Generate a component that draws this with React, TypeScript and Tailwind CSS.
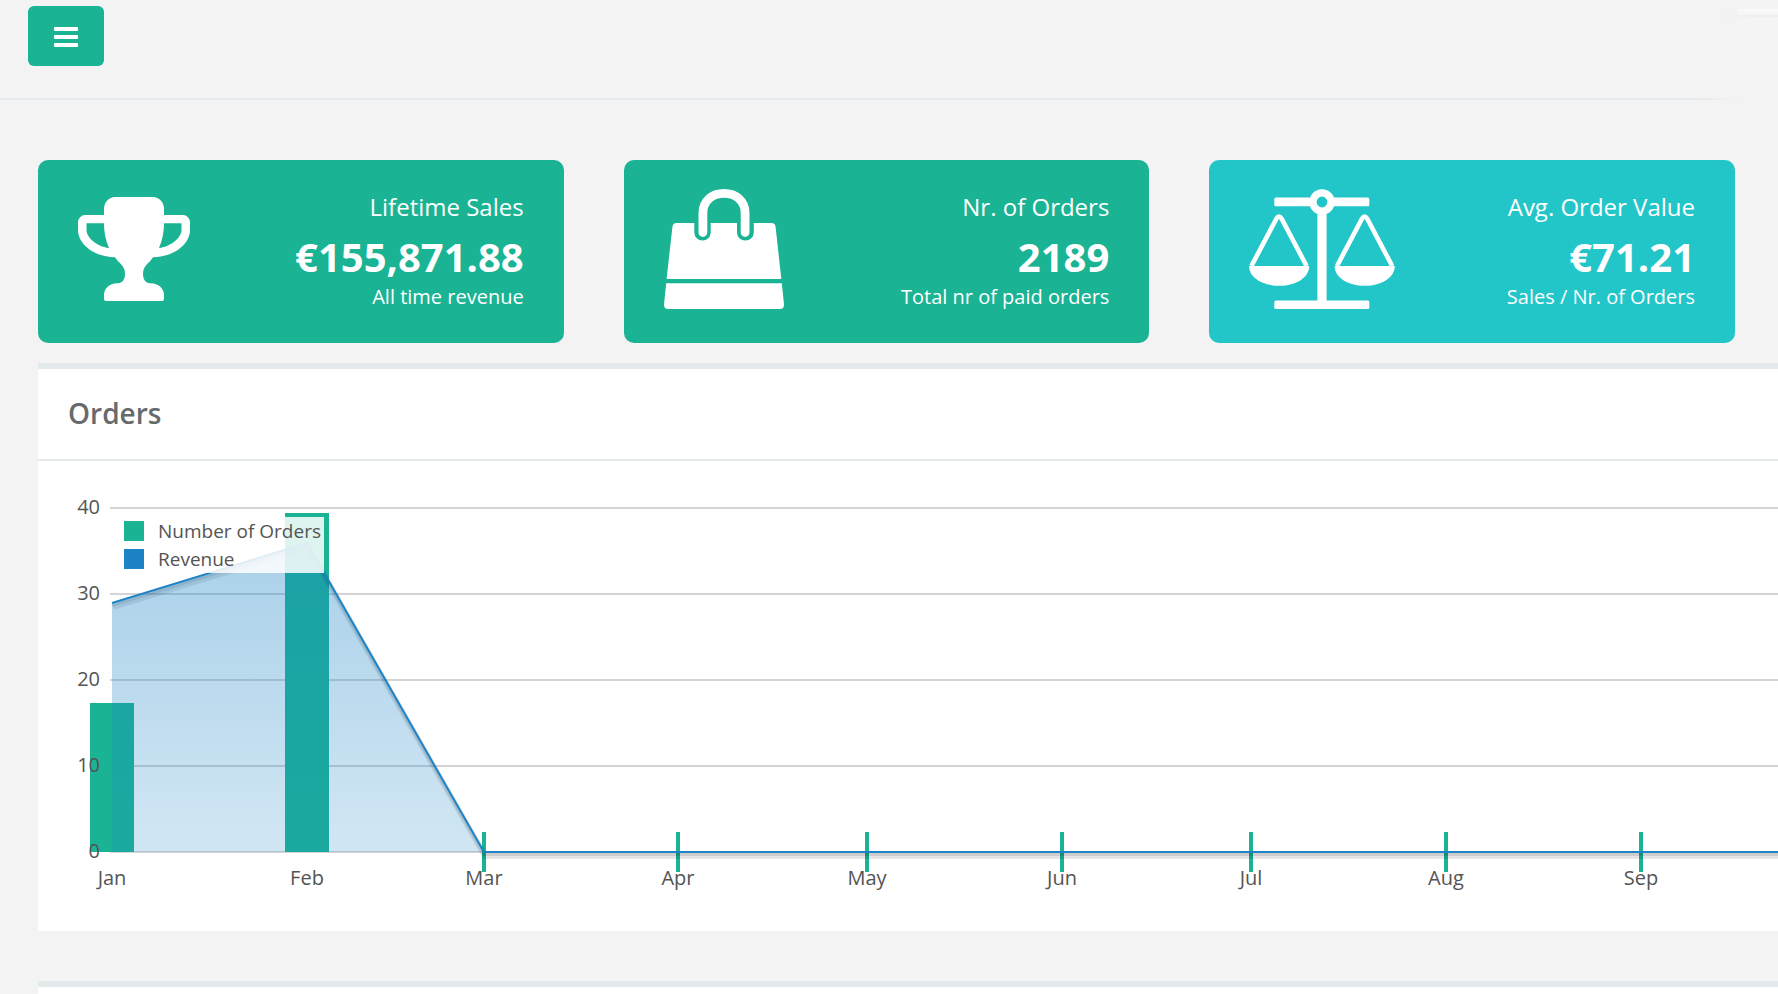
import type { ReactNode } from 'react';

const TrophyIcon = () => (
  <svg aria-hidden="true" width="112" height="120" viewBox="0 -8 112 120" fill="#fff">
    <path
      fillRule="evenodd"
      d="M26 18V12A11 12 0 0 1 37 0H75A11 12 0 0 1 86 12V18H105A7 7.500 0 0 1 112 25.500V33C112 47 96 60 75 60.300C71 67 65 68 65 77C65 83 68 86.300 73 86.300C80 86.500 86 91 86 98V102A2 2 0 0 1 84 104H28A2 2 0 0 1 26 102V98C26 91 32 86.500 39 86.300C44 86.300 47 83 47 77C47 68 41 67 37 60.300C16 60 0 47 0 33V25.500A7 7.500 0 0 1 7 18ZM26 26.300H8.500V33C8.500 40 18 49.500 31 51C27.500 43 26 35 26 26.300ZM86 26.300C86 35 84.500 43 81 51C94 49.500 103.500 40 103.500 33V26.300Z"
    />
  </svg>
);

const BagIcon = () => (
  <svg aria-hidden="true" width="120" height="120" viewBox="0 0 120 120" fill="#fff">
    <path d="M12.500 34H30.300V43.500A8.200 8 0 0 0 46.700 43.500V34H73V43.500A8.400 8 0 0 0 89.800 43.500V34H107.500Q111.300 34 111.600 38L117.300 90H2.600L8.400 38Q8.700 34 12.500 34Z" />
    <path d="M2.200 94.300H117.800L120 115.500Q120 120 116 120H4Q0 120 0 115.500Z" />
    <path
      d="M38.900 43.500V24C38.900 12 48 4.400 60 4.400S81.100 12 81.100 24V43.500"
      fill="none"
      stroke="#fff"
      strokeWidth="8.800"
      strokeLinecap="round"
    />
  </svg>
);

const Pan = ({ x }: { x: number }) => (
  <g transform={`translate(${x} 0)`}>
    <path d="M2.400 77L27.500 29.500Q30 25.800 32.500 29.500L57.600 77" fill="none" stroke="#fff" strokeWidth="4.600" />
    <path d="M0 77H60.200C60.200 88.500 47 96.800 30.100 96.800S0 88.500 0 77Z" />
  </g>
);

const ScaleIcon = () => (
  <svg aria-hidden="true" width="146" height="120" viewBox="0 0 146 120" fill="#fff">
    <rect x="25.300" y="8.600" width="36" height="8.600" rx="1.500" />
    <rect x="84" y="8.600" width="36.300" height="8.600" rx="1.500" />
    <circle cx="73" cy="13" r="9.100" fill="none" stroke="#fff" strokeWidth="7.400" />
    <rect x="68.400" y="24" width="9.200" height="90" />
    <rect x="25.300" y="111.400" width="95" height="8.600" rx="1.500" />
    <Pan x={0} />
    <Pan x={85.600} />
  </svg>
);

type StatProps = { icon: ReactNode; title: string; value: string; note: string; color: string };

const StatCard = ({ icon, title, value, note, color }: StatProps) => (
  <article className={`flex flex-1 items-start justify-between rounded-[10px] px-10 pt-[27px] pb-[34px] text-white ${color}`}>
    <div className="pt-0.5">{icon}</div>
    <div className="text-right">
      <h3 className="text-2xl leading-10">{title}</h3>
      <p className="text-[40px] leading-[60px] font-bold">{value}</p>
      <p className="text-xl leading-5">{note}</p>
    </div>
  </article>
);

const BASE = 391;
const points = [
  { label: 'Jan', x: 74, revenue: 142, orders: 242 },
  { label: 'Feb', x: 269, revenue: 82, orders: 52 },
  { label: 'Mar', x: 446, revenue: BASE, orders: BASE },
  { label: 'Apr', x: 640, revenue: BASE, orders: BASE },
  { label: 'May', x: 829, revenue: BASE, orders: BASE },
  { label: 'Jun', x: 1024, revenue: BASE, orders: BASE },
  { label: 'Jul', x: 1213, revenue: BASE, orders: BASE },
  { label: 'Aug', x: 1408, revenue: BASE, orders: BASE },
  { label: 'Sep', x: 1603, revenue: BASE, orders: BASE },
];
const line = 'M' + points.map((p) => `${p.x} ${p.revenue}`).join('L') + 'H4000';

const OrdersChart = () => (
  <svg role="img" aria-label="Number of orders and revenue per month" className="block h-[470px] w-full">
    <defs>
      <linearGradient id="revenue" gradientUnits="userSpaceOnUse" x1="0" y1="48" x2="0" y2="392">
        <stop offset="0" stopColor="#1c84c6" stopOpacity="0.4" />
        <stop offset="1" stopColor="#1c84c6" stopOpacity="0.2" />
      </linearGradient>
    </defs>
    {[46, 132, 218, 304, 390].map((y) => (
      <rect key={y} x="72" y={y} width="100%" height="2" fill="#545454" fillOpacity="0.25" />
    ))}
    {points.map((p) =>
      p.orders < BASE ? (
        <rect key={p.label} x={p.x - 22} y={p.orders} width="44" height={BASE - p.orders} fill="#1ab394" />
      ) : (
        <rect key={p.label} x={p.x - 2} y={BASE - 20} width="4" height="40" fill="#1ab394" />
      ),
    )}
    <path d={line} transform="translate(1 4)" fill="none" stroke="#000" strokeOpacity="0.1" strokeWidth="6" />
    <path d={line} transform="translate(0 2.5)" fill="none" stroke="#000" strokeOpacity="0.1" strokeWidth="3" />
    <path d={`${line}V${BASE}H74Z`} fill="url(#revenue)" />
    <path d={line} fill="none" stroke="#1c84c6" strokeWidth="2" />
    <g fill="#545454" fontSize="20">
      {['40', '30', '20', '10', '0'].map((t, i) => (
        <text key={t} x="62" y={53 + i * 86} textAnchor="end">
          {t}
        </text>
      ))}
      {points.map((p) => (
        <text key={p.label} x={p.x} y="424" textAnchor="middle">
          {p.label}
        </text>
      ))}
    </g>
  </svg>
);

const LegendItem = ({ color, label }: { color: string; label: string }) => (
  <li className="flex items-center gap-3.5">
    <span className={`size-5 ${color}`} />
    {label}
  </li>
);

export default function App() {
  return (
    <div className="flex min-h-screen flex-col overflow-hidden bg-[#f3f3f3] font-['Open_Sans',sans-serif]">
      <header>
        <div className="flex h-[98px] items-start justify-between pt-1.5 pl-7">
          <button
            type="button"
            aria-label="Toggle menu"
            className="flex h-[60px] w-[76px] items-center justify-center rounded-md bg-[#1ab394]"
          >
            <svg aria-hidden="true" width="24" height="22" viewBox="0 -2 24 22" fill="#fff">
              <rect width="24" height="4" rx="1" />
              <rect y="8" width="24" height="4" rx="1" />
              <rect y="16" width="24" height="4" rx="1" />
            </svg>
          </button>
          <div className="flex w-16 flex-col items-end pt-[3px]">
            <div className="h-1.5 w-10 bg-linear-to-b from-[#fbfbfb] to-[#f5f5f5]" />
            <div className="h-0.5 w-full bg-linear-to-r from-transparent to-[#eceeef]" />
            <div className="h-2 w-10 bg-[#f4f4f4]" />
          </div>
        </div>
        <div className="h-0.5 bg-linear-to-r from-[#e4e9ed] from-95% to-transparent to-98%" />
      </header>

      <main className="flex flex-1 flex-col pt-15 pl-[38px]">
        <section aria-label="Statistics" className="flex gap-15 pr-[43px]">
          <StatCard icon={<TrophyIcon />} title="Lifetime Sales" value="€155,871.88" note="All time revenue" color="bg-[#1ab394]" />
          <StatCard icon={<BagIcon />} title="Nr. of Orders" value="2189" note="Total nr of paid orders" color="bg-[#1ab394]" />
          <StatCard icon={<ScaleIcon />} title="Avg. Order Value" value="€71.21" note="Sales / Nr. of Orders" color="bg-[#23c6c8]" />
        </section>

        <section className="mt-5 border-t-6 border-[#e4e9ec] bg-white">
          <h2 className="border-b-2 border-[#e4e9ec] px-[30px] pt-6 pb-[26px] text-[28px] leading-10 font-semibold text-[#676a6c]">
            Orders
          </h2>
          <div className="relative">
            <OrdersChart />
            <ul className="absolute top-14 left-[82px] flex flex-col bg-white/85 pr-[3px] pl-1 text-[19px] leading-7 text-[#545454]">
              <LegendItem color="bg-[#1ab394]" label="Number of Orders" />
              <LegendItem color="bg-[#1c84c6]" label="Revenue" />
            </ul>
          </div>
        </section>

        <section aria-label="Details" className="mt-[50px] flex-1 border-t-6 border-[#e4e9ec] bg-white" />
      </main>
    </div>
  );
}
